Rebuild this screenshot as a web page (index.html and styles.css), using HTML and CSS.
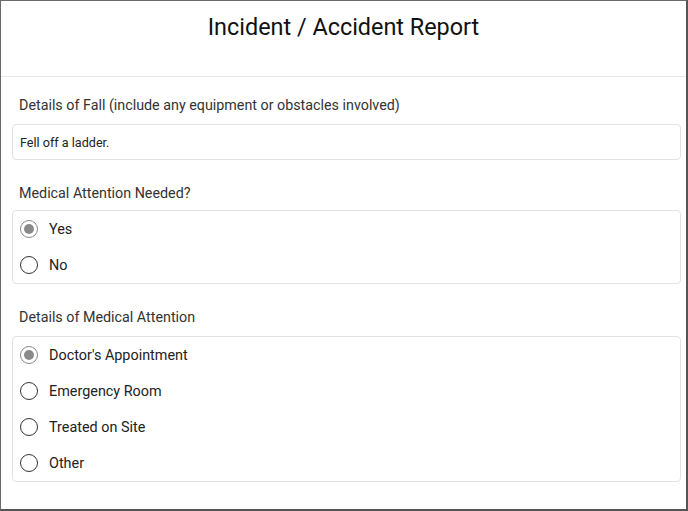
FILE: index.html
```html
<!DOCTYPE html>
<html lang="en">
<head>
    <meta charset="UTF-8">
    <meta name="viewport" content="width=device-width, initial-scale=1.0">
    <title>Incident / Accident Report</title>
    <link rel="stylesheet" href="styles.css">
</head>
<body>
    <div class="frame">
        <header class="report-header">
            <h1>Incident / Accident Report</h1>
        </header>
        <form class="report-form">
            <div class="field">
                <label class="field-label" for="fallDetails">Details of Fall (include any equipment or obstacles involved)</label>
                <input class="text-input" type="text" id="fallDetails" value="Fell off a ladder.">
            </div>
            <div class="field">
                <p class="field-label group-label">Medical Attention Needed?</p>
                <div class="option-box">
                    <label class="option"><input type="radio" name="needed" checked><span>Yes</span></label>
                    <label class="option"><input type="radio" name="needed"><span>No</span></label>
                </div>
            </div>
            <div class="field">
                <p class="field-label">Details of Medical Attention</p>
                <div class="option-box">
                    <label class="option"><input type="radio" name="attention" checked><span>Doctor's Appointment</span></label>
                    <label class="option"><input type="radio" name="attention"><span>Emergency Room</span></label>
                    <label class="option"><input type="radio" name="attention"><span>Treated on Site</span></label>
                    <label class="option"><input type="radio" name="attention"><span>Other</span></label>
                </div>
            </div>
        </form>
    </div>
</body>
</html>
```

FILE: styles.css
```css
* {
    margin: 0;
    padding: 0;
    box-sizing: border-box;
    font-family: Roboto, 'Liberation Sans', sans-serif;
}

body {
    background: #fff;
}

.frame {
    width: 688px;
    height: 511px;
    border-top: 1px solid #6a6a6a;
    border-left: 1px solid #6a6a6a;
    border-right: 2px solid #555;
    border-bottom: 2px solid #555;
    overflow: hidden;
}

.report-header {
    height: 76px;
    border-bottom: 1px solid #e8e8e8;
    padding-top: 12px;
}

.report-header h1 {
    text-align: center;
    font-size: 23.4px;
    font-weight: 400;
    line-height: 28px;
    color: #111;
}

.report-form {
    display: flex;
    flex-direction: column;
    gap: 23px;
    padding: 18px 5px 0 11px;
}

.field-label {
    display: block;
    font-size: 14.3px;
    line-height: 20px;
    color: #333;
    padding-left: 7px;
    margin-bottom: 9px;
}

.group-label {
    margin-bottom: 7px;
}

.text-input {
    display: block;
    width: 100%;
    height: 36px;
    border: 1px solid #e2e2e2;
    border-radius: 4px;
    padding: 0 7px;
    font-size: 12.6px;
    color: #222;
    outline: none;
}

.option-box {
    border: 1px solid #e2e2e2;
    border-radius: 4px;
}

.option {
    display: flex;
    align-items: center;
    height: 36px;
    padding-left: 7px;
    font-size: 14.4px;
    color: #222;
}

.option input {
    appearance: none;
    width: 18px;
    height: 18px;
    border: 1.5px solid #333;
    border-radius: 50%;
    margin-right: 11px;
    display: grid;
    place-content: center;
}

.option input:checked {
    border-color: #8a8a8a;
}

.option input:checked::before {
    content: "";
    width: 10px;
    height: 10px;
    border-radius: 50%;
    background: #8a8a8a;
}
```
